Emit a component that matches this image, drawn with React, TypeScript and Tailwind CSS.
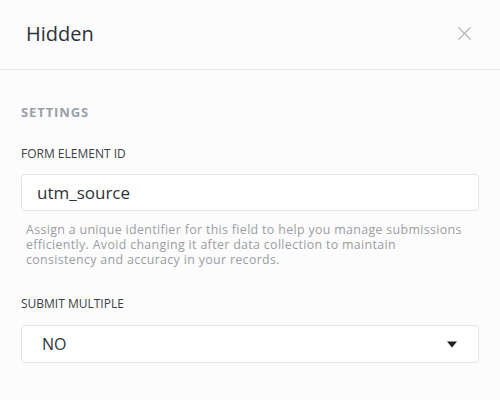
const font = { fontFamily: "'Open Sans', 'Noto Sans', sans-serif" };

function Label({ children }: { children: React.ReactNode }) {
  return <div className="text-[12px] uppercase leading-none text-[#3b3f45]">{children}</div>;
}

export default function App() {
  return (
    <div className="h-[400px] w-[500px] bg-[#fcfcfd] text-[#30343a]" style={font}>
      {/* Header */}
      <header className="flex h-[70px] items-center justify-between border-b border-[#e6e8ec] pl-[26px] pr-[28px]">
        <h1 className="-mt-[2px] text-[20px] leading-none text-[#2e3238]">Hidden</h1>
        <button aria-label="Close" className="-mt-[2px] flex h-4 w-4 items-center justify-center text-[#a3a7ad]">
          <svg viewBox="0 0 16 16" className="h-[15px] w-[15px]" fill="none" stroke="currentColor" strokeWidth="1.1">
            <path d="M1.5 1.5l13 13M14.5 1.5l-13 13" />
          </svg>
        </button>
      </header>

      <div className="px-[21px] pt-[36px]">
        <div className="text-[13px] font-bold uppercase leading-none tracking-[0.9px] text-[#9aa0a7]">Settings</div>

        <div className="mt-[29px]">
          <Label>Form Element ID</Label>
          <div className="mt-[14px] flex h-[37px] items-center rounded-[4px] border border-[#e3e5e9] bg-white px-[15px] text-[17px] text-[#2e3238]">
            utm_source
          </div>
          <p className="mt-[11px] pl-[5px] text-[12.4px] leading-[15px] tracking-[0.34px] text-[#9a9ea4]">
            Assign a unique identifier for this field to help you manage submissions
            <br />
            efficiently. Avoid changing it after data collection to maintain
            <br />
            consistency and accuracy in your records.
          </p>
        </div>

        <div className="mt-[31px]">
          <Label>Submit Multiple</Label>
          <div className="mt-[15px] flex h-[38px] items-center justify-between rounded-[4px] border border-[#e3e5e9] bg-white pl-[20px] pr-[21px] text-[16px] font-medium text-[#2e3238]">
            <span>NO</span>
            <svg viewBox="0 0 10 6" className="h-[7px] w-[10px] text-[#1d1f22]" fill="currentColor">
              <path d="M0 0h10L5 6z" />
            </svg>
          </div>
        </div>
      </div>
    </div>
  );
}
